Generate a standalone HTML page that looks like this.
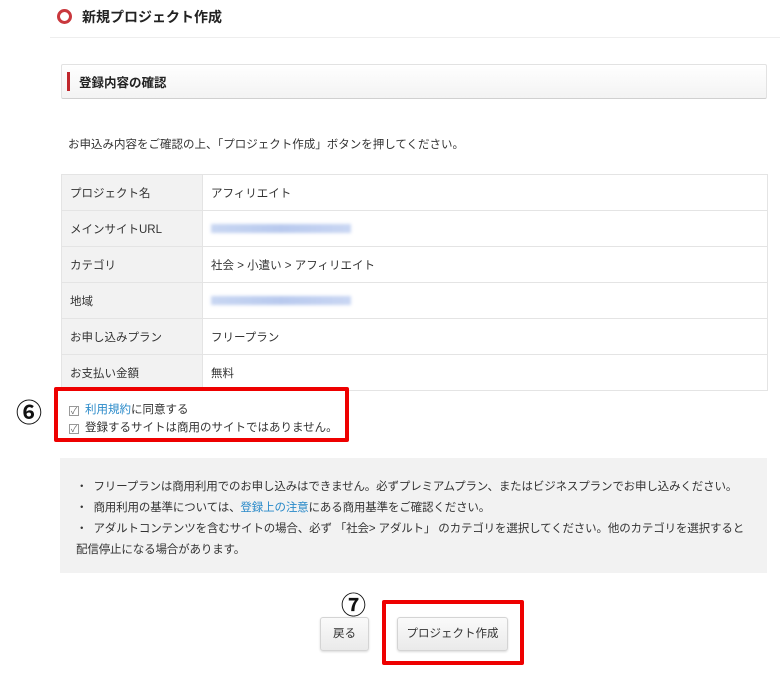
<!DOCTYPE html>
<html><head><meta charset="utf-8"><style>
*{margin:0;padding:0;box-sizing:border-box}
body{width:780px;height:676px;background:#fff;font-family:"Liberation Sans","Noto Sans CJK JP",sans-serif;color:#333;position:relative;overflow:hidden}
.a{position:absolute;white-space:nowrap}
.t{font-size:11.5px}
table{border-collapse:collapse;position:absolute;left:61px;top:174px;width:707px}
td{height:36px;border:1px solid #e4e4e4;font-size:11.5px;padding-left:8px}
td.l{width:141px;background:#f2f2f2}
.blur{display:inline-block;width:140px;height:9px;background:linear-gradient(90deg,#c8d6f2,#b8c9ee,#c9d6f3);filter:blur(1.5px);vertical-align:middle}
.cb{display:inline-block;width:10px;height:10px;border:1px solid #999;font-size:9px;line-height:8px;text-align:center;color:#666;margin-right:6px;vertical-align:-1px}
.btn{position:absolute;border:1px solid #d4d4d4;border-radius:3px;background:linear-gradient(#fafafa,#eaeaea);font-size:11.5px;text-align:center;line-height:32px;box-shadow:0 1px 2px rgba(0,0,0,.15)}
.red{position:absolute;border:4px solid #e00;border-radius:2px}
a{color:#2a8ac9;text-decoration:none}
.n{letter-spacing:-0.15px}
</style></head><body>
<div class="a" style="left:57px;top:9px;width:15px;height:15px;border:3px solid #c9383d;border-radius:50%"></div>
<div class="a" style="left:82px;top:7px;font-size:14px;font-weight:bold;color:#222">新規プロジェクト作成</div>
<div class="a" style="left:50px;top:37px;width:730px;height:1px;background:#eee"></div>
<div class="a" style="left:61px;top:64px;width:706px;height:35px;border:1px solid #e2e2e2;border-bottom-color:#d0d0d0;border-radius:2px;background:linear-gradient(#fff,#f3f3f3)"></div>
<div class="a" style="left:67px;top:72px;width:3px;height:19px;background:#c0272d"></div>
<div class="a" style="left:79px;top:72px;font-size:12.5px;font-weight:bold;color:#222">登録内容の確認</div>
<div class="a t" style="left:68px;top:136px">お申込み内容をご確認の上、「プロジェクト作成」ボタンを押してください。</div>
<table>
<tr><td class="l">プロジェクト名</td><td>アフィリエイト</td></tr>
<tr><td class="l">メインサイトURL</td><td><span class="blur"></span></td></tr>
<tr><td class="l">カテゴリ</td><td>社会 &gt; 小遣い &gt; アフィリエイト</td></tr>
<tr><td class="l">地域</td><td><span class="blur"></span></td></tr>
<tr><td class="l">お申し込みプラン</td><td>フリープラン</td></tr>
<tr><td class="l">お支払い金額</td><td>無料</td></tr>
</table>
<div class="red" style="left:54px;top:387px;width:295px;height:55px"></div>
<div class="a" style="left:16px;top:393px;font-size:26px;font-weight:bold;color:#111">⑥</div>
<div class="a t" style="left:69px;top:401px"><span class="cb">✓</span><a>利用規約</a>に同意する</div>
<div class="a t" style="left:69px;top:419px"><span class="cb">✓</span>登録するサイトは商用のサイトではありません。</div>
<div class="a" style="left:60px;top:458px;width:707px;height:115px;background:#f2f2f2"></div>
<div class="a t n" style="left:76px;top:478px">・&nbsp; フリープランは商用利用でのお申し込みはできません。必ずプレミアムプラン、またはビジネスプランでお申し込みください。</div>
<div class="a t n" style="left:76px;top:499px">・&nbsp; 商用利用の基準については、<a>登録上の注意</a>にある商用基準をご確認ください。</div>
<div class="a t n" style="left:76px;top:520px">・&nbsp; アダルトコンテンツを含むサイトの場合、必ず 「社会&gt; アダルト」 のカテゴリを選択してください。他のカテゴリを選択すると</div>
<div class="a t n" style="left:76px;top:541px">配信停止になる場合があります。</div>
<div class="btn" style="left:320px;top:617px;width:49px;height:34px">戻る</div>
<div class="a" style="left:341px;top:586px;font-size:25px;font-weight:bold;color:#111">⑦</div>
<div class="red" style="left:382px;top:600px;width:142px;height:65px"></div>
<div class="btn" style="left:397px;top:617px;width:111px;height:34px">プロジェクト作成</div>
</body></html>
